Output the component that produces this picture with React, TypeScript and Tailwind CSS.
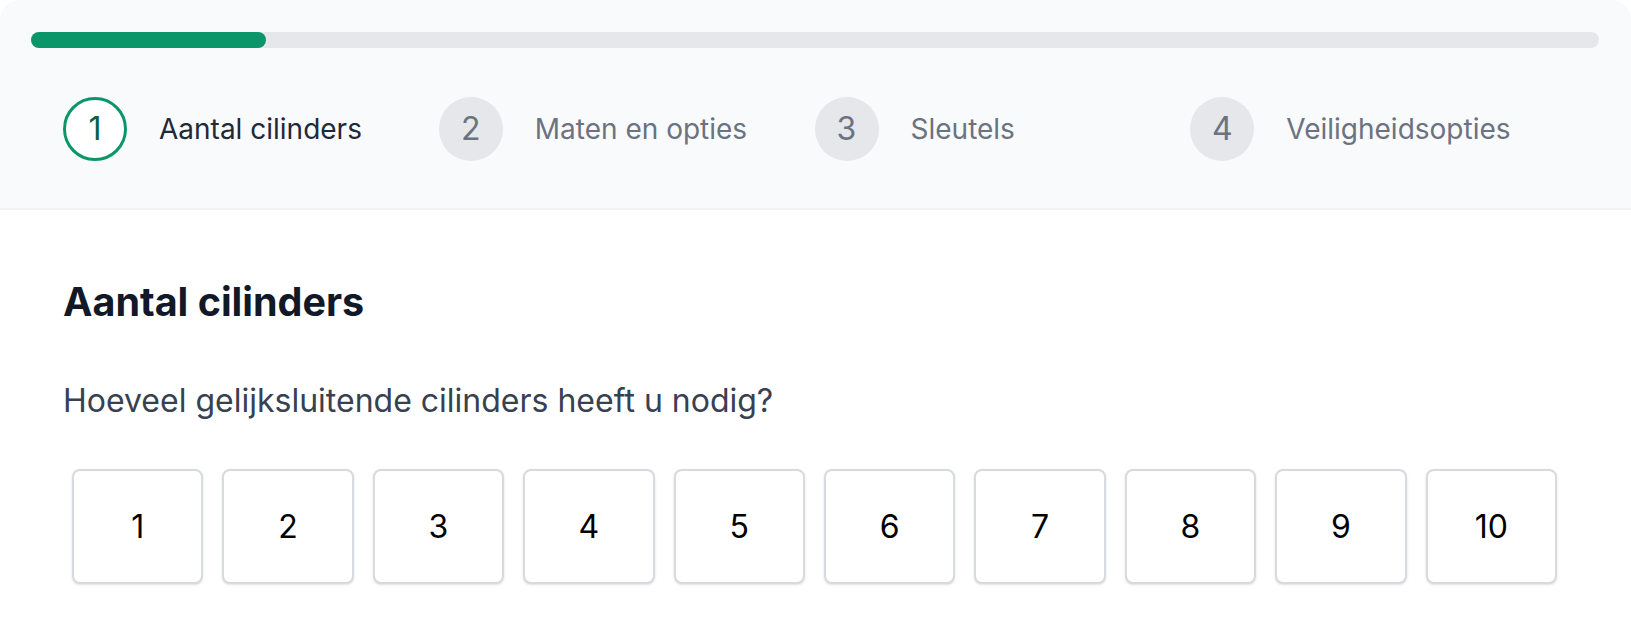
const steps = [
  { id: 1, label: "Aantal cilinders" },
  { id: 2, label: "Maten en opties" },
  { id: 3, label: "Sleutels" },
  { id: 4, label: "Veiligheidsopties" },
];

const counts = [1, 2, 3, 4, 5, 6, 7, 8, 9, 10];

const currentStep = 1;

export default function App() {
  return (
    <div className="min-h-[644px] w-full bg-white font-['Inter',sans-serif]">
      <div className="w-full overflow-hidden rounded-t-[20px] bg-white">
        <header className="border-b-2 border-[#f1f2f4] bg-[#f9fafb] pb-[47px] pl-[31px] pr-8 pt-8">
          <div className="h-4 w-full rounded-full bg-[#e5e7eb]">
            <div className="h-4 w-[15%] rounded-full bg-[#0a9669]" />
          </div>

          <ol className="mt-[49px] grid grid-cols-4 pl-8 pr-[33px]">
            {steps.map((step) => {
              const isActive = step.id === currentStep;

              return (
                <li key={step.id} className="flex items-center gap-8">
                  <span
                    className={`flex size-16 shrink-0 items-center justify-center rounded-full text-[32px] leading-none ${
                      isActive
                        ? "border-[3px] border-[#0a9669] bg-white text-[#065f46]"
                        : "bg-[#e5e7eb] text-[#6b7280]"
                    }`}
                  >
                    {step.id}
                  </span>
                  <span
                    className={`text-[28px] leading-[36px] ${
                      isActive ? "text-[#1f2937]" : "text-[#6b7280]"
                    }`}
                  >
                    {step.label}
                  </span>
                </li>
              );
            })}
          </ol>
        </header>

        <section className="pb-12 pl-[63px] pr-[65px] pt-[68px]">
          <h2 className="text-[39.5px] font-bold leading-[48px] text-[#111827]">
            Aantal cilinders
          </h2>
          <p className="mt-[54px] text-[32px] leading-[42px] text-[#374151]">
            Hoeveel gelijksluitende cilinders heeft u nodig?
          </p>

          <div className="mt-[47px] grid grid-cols-10 gap-[19px] px-[9px]">
            {counts.map((count) => (
              <button
                key={count}
                type="button"
                className="flex h-[115px] items-center justify-center rounded-[8px] border-2 border-[#d7dae0] bg-white text-[32px] text-black shadow-sm"
              >
                {count}
              </button>
            ))}
          </div>
        </section>
      </div>
    </div>
  );
}
